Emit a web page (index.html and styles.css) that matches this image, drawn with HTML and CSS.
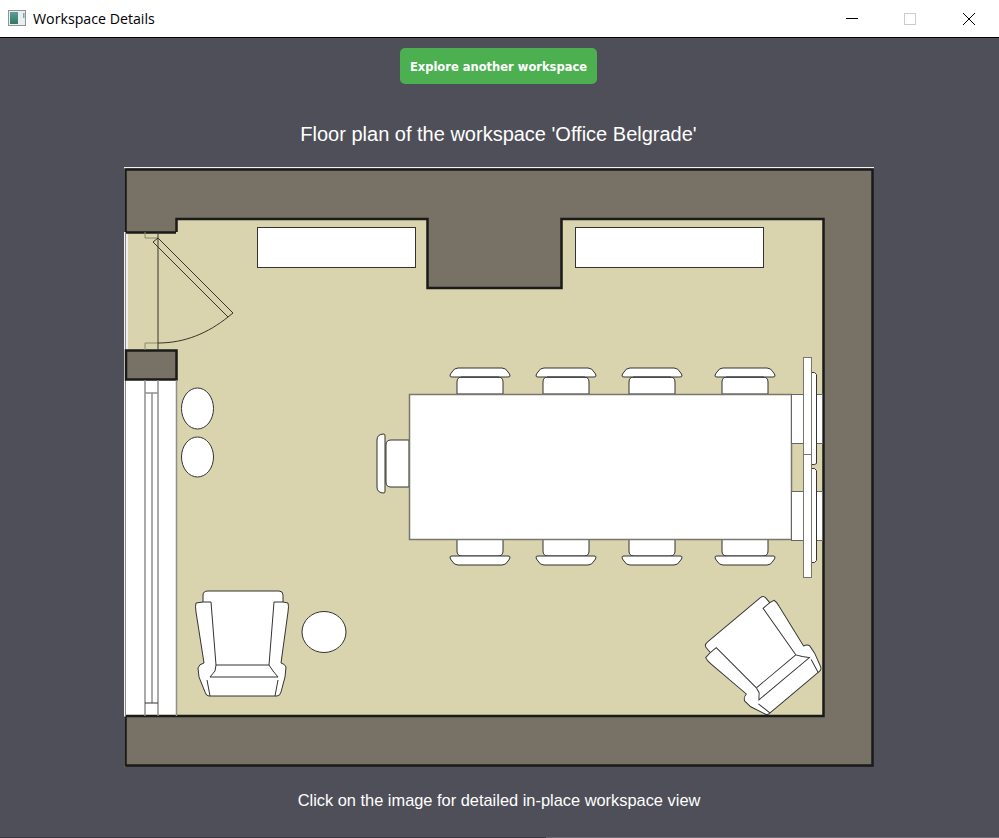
FILE: index.html
```html
<!DOCTYPE html>
<html lang="en">
<head>
    <meta charset="UTF-8">
    <meta name="viewport" content="width=device-width, initial-scale=1.0">
    <title>Workspace Details</title>
    <link rel="stylesheet" href="styles.css">
</head>
<body>
    <header class="titlebar">
        <svg class="app-icon" viewBox="0 0 18 16" xmlns="http://www.w3.org/2000/svg">
            <defs>
                <linearGradient id="iconFill" x1="0" y1="0" x2="0" y2="1">
                    <stop offset="0" stop-color="#5f9c98"/>
                    <stop offset="1" stop-color="#2f7a5f"/>
                </linearGradient>
            </defs>
            <rect x="0.5" y="0.5" width="17" height="15" fill="#e9eeee" stroke="#8e9496"/>
            <rect x="2" y="2" width="8" height="12" fill="url(#iconFill)"/>
            <rect x="15" y="3" width="1.5" height="5" fill="#7fa8a6"/>
        </svg>
        <span class="titlebar-text">Workspace Details</span>
        <div class="window-controls">
            <span class="window-btn">
                <svg width="12" height="12" viewBox="0 0 12 12"><path d="M0 5.500h12" stroke="#000" fill="none"/></svg>
            </span>
            <span class="window-btn">
                <svg width="12" height="12" viewBox="0 0 12 12"><rect x="0.5" y="0.5" width="11" height="11" stroke="#ccc" fill="none"/></svg>
            </span>
            <span class="window-btn">
                <svg width="12" height="12" viewBox="0 0 12 12"><path d="M0 0l12 12M12 0L0 12" stroke="#000" fill="none"/></svg>
            </span>
        </div>
    </header>

    <main class="content">
        <button class="explore-btn">Explore another workspace</button>
        <h2 class="plan-title">Floor plan of the workspace 'Office Belgrade'</h2>

        <!-- viewBox uses the window's coordinates, easier to measure against -->
        <svg class="floor-plan" viewBox="124 167 750 600" xmlns="http://www.w3.org/2000/svg">
            <defs>
                <g id="chairTop">
                    <path class="item" d="M457 394v-12q0-5 5-5h36q5 0 5 5v12z"/>
                    <path class="item" d="M450 376q0-2 2-4 2-4 6-4h44q4 0 6 4 2 2 2 4 0 1-2 1h-56q-2 0-2-1z"/>
                    <path class="dark" d="M461 377h38"/>
                </g>
                <g id="chairBottom">
                    <path class="item" d="M457 539v12q0 5 5 5h36q5 0 5-5v-12z"/>
                    <path class="item" d="M450 557q0 2 2 4 2 4 6 4h44q4 0 6-4 2-2 2-4 0-1-2-1h-56q-2 0-2 1z"/>
                </g>
                <g id="armchair">
                    <path class="item" d="M203 602V595Q203 591 208 591H279Q283 591 283 595V602L288 603Q289 606 288 612L281 663Q285 664 286 667L285 677 281 692Q280 696 277 696H209Q206 696 205 692L199 677 198 668Q199 664 204 663L196 612Q195 606 196 603Z"/>
                    <path class="line" d="M203 602l8 0 5 63M283 602l-9 0-5 63"/>
                    <path class="line" d="M216 665h53M216 665l-1 6-5 6h68l-5-6-4-6M207 680l3 16M278 680l-3 16"/>
                </g>
            </defs>

            <rect class="outline" x="124" y="167" width="750" height="1.5"/>
            <rect class="outline" x="124" y="167" width="1.5" height="600"/>
            <rect class="wall" x="125.5" y="169.5" width="747" height="596"/>

            <!-- room floor, door gap and window strip -->
            <path class="floor" d="M126 232h50v-13h251v69h134v-69h262v497H176V380h1v-30h-51z"/>
            <rect class="door-light" x="126" y="232" width="2" height="117"/>
            <rect class="window-strip" x="126" y="380" width="50" height="336"/>
            <path class="wall-edge" d="M125.5 232v-62.500h747v596h-747V716.500M176 232.500h-50M176.500 232v-13h251v69h134v-69h262v497H126"/>
            <rect class="pillar" x="126" y="350.500" width="50.500" height="29"/>

            <!-- door -->
            <path class="thin" d="M145 232v6h13M145 350v-7h13"/>
            <path class="door" d="M158 232v118M153 242l5-4 75 75-5 4zM228 317C208 333 185 343 158 343"/>

            <!-- window -->
            <path class="glass" d="M145 380v336M152 393v310M158 380v336M176.500 380v336"/>
            <path class="glass" d="M145 393h13"/>
            <path class="dark" d="M145 703h13"/>

            <!-- wall cupboards -->
            <rect class="item" x="257.500" y="227.500" width="158" height="40"/>
            <rect class="item" x="575.500" y="227.500" width="188" height="40"/>

            <!-- side seats -->
            <ellipse class="item" cx="197.500" cy="408.500" rx="16" ry="20.500"/>
            <ellipse class="item" cx="197.500" cy="457" rx="16" ry="20"/>
            <ellipse class="item" cx="324" cy="632" rx="22" ry="20.500"/>
            <use href="#armchair"/>
            <use href="#armchair" transform="translate(763 656.500) rotate(-40) scale(0.97 0.9) translate(-242 -643)"/>

            <!-- chairs around the table -->
            <use href="#chairTop"/>
            <use href="#chairTop" x="86"/>
            <use href="#chairTop" x="172"/>
            <use href="#chairTop" x="265"/>
            <use href="#chairBottom"/>
            <use href="#chairBottom" x="86"/>
            <use href="#chairBottom" x="172"/>
            <use href="#chairBottom" x="265"/>
            <path class="item" d="M409 440h-18q-5 0-5 5v37q0 5 5 5h18z"/>
            <path class="item" d="M384 434q-7 0-7 6v47q0 6 7 6 1 0 1-2v-55q0-2-1-2z"/>

            <!-- table and the end unit -->
            <rect class="table" x="409.500" y="394.500" width="382" height="145"/>
            <rect class="cabinet" x="791.500" y="394.500" width="31" height="49"/>
            <rect class="cabinet" x="791.500" y="491.500" width="31" height="49"/>
            <path class="item" d="M811.500 372.500h3l2 2v89l-2 1h-3zM811.500 468.500h3l2 2v90l-2 2h-3z"/>
            <rect class="panel" x="803.500" y="357.500" width="8" height="97"/>
            <rect class="panel" x="803.500" y="454.500" width="8" height="123"/>
        </svg>

        <p class="plan-hint">Click on the image for detailed in-place workspace view</p>
    </main>
    <div class="bottom-edge"></div>
</body>
</html>
```

FILE: styles.css
```css
html, body {
    height: 100%;
}
body {
    margin: 0;
    display: flex;
    flex-direction: column;
    overflow: hidden;
    background: #4f4f59;
    color: #fff;
    font-family: 'Liberation Sans', Arial, sans-serif;
}
.titlebar {
    display: flex;
    align-items: center;
    height: 37px;
    flex: none;
    background: #fff;
    border-bottom: 1px solid #000;
    color: #000;
}
.app-icon {
    width: 18px;
    height: 16px;
    margin: 0 7px 2px 8px;
}
.titlebar-text {
    font-family: 'Open Sans', 'Noto Sans', sans-serif;
    font-size: 14.200px;
}
.window-controls {
    display: flex;
    margin-left: auto;
    margin-right: 1px;
}
.window-btn {
    display: flex;
    align-items: center;
    justify-content: center;
    width: 58.500px;
    height: 37px;
}
.content {
    flex: 1;
    display: flex;
    flex-direction: column;
    align-items: center;
}
.explore-btn {
    width: 197px;
    height: 36px;
    margin: 10px 0 0 -2px;
    padding: 2px 0 0;
    border: none;
    border-radius: 5px;
    background: #4caf50;
    color: #fff;
    font-family: 'DejaVu Sans', Verdana, sans-serif;
    font-size: 11.500px;
    font-weight: bold;
    cursor: pointer;
}
.plan-title {
    margin: 38px 0 21px -2px;
    font-size: 20px;
    font-weight: normal;
    line-height: 24px;
}
.floor-plan {
    display: block;
    width: 750px;
    height: 600px;
    flex: none;
    margin-left: -2px;
    cursor: pointer;
    filter: blur(0.3px);
}
.plan-hint {
    margin: 24px 0 0 -1px;
    font-size: 16.400px;
    line-height: 19px;
}
.bottom-edge {
    position: absolute;
    left: 0;
    right: 0;
    bottom: 0;
    height: 1px;
    background: linear-gradient(to right, #3a3a42 546px, #6a6a72 546px);
}

/* floor plan parts */
.outline {
    fill: #f2f2f2;
}
.wall {
    fill: #787266;
}
.floor {
    fill: #d9d3ae;
}
.door-light {
    fill: #eeeeee;
}
.window-strip {
    fill: #fff;
}
.wall-edge {
    fill: none;
    stroke: #1a1a18;
    stroke-width: 2.500px;
}
.pillar {
    fill: #787266;
    stroke: #1a1a18;
    stroke-width: 2.500px;
}
.thin {
    fill: none;
    stroke: #8d886f;
}
.door {
    fill: none;
    stroke: #38352a;
}
.glass {
    fill: none;
    stroke: #8f8f8f;
    stroke-width: 1.500px;
}
.dark {
    fill: none;
    stroke: #333;
}
.line {
    fill: none;
    stroke: #333;
}
.item {
    fill: #fff;
    stroke: #333;
}
.table {
    fill: #fff;
    stroke: #77776c;
    stroke-width: 1.500px;
}
.cabinet {
    fill: #fff;
    stroke: #666;
}
.panel {
    fill: #fff;
    stroke: #77776c;
}
```
